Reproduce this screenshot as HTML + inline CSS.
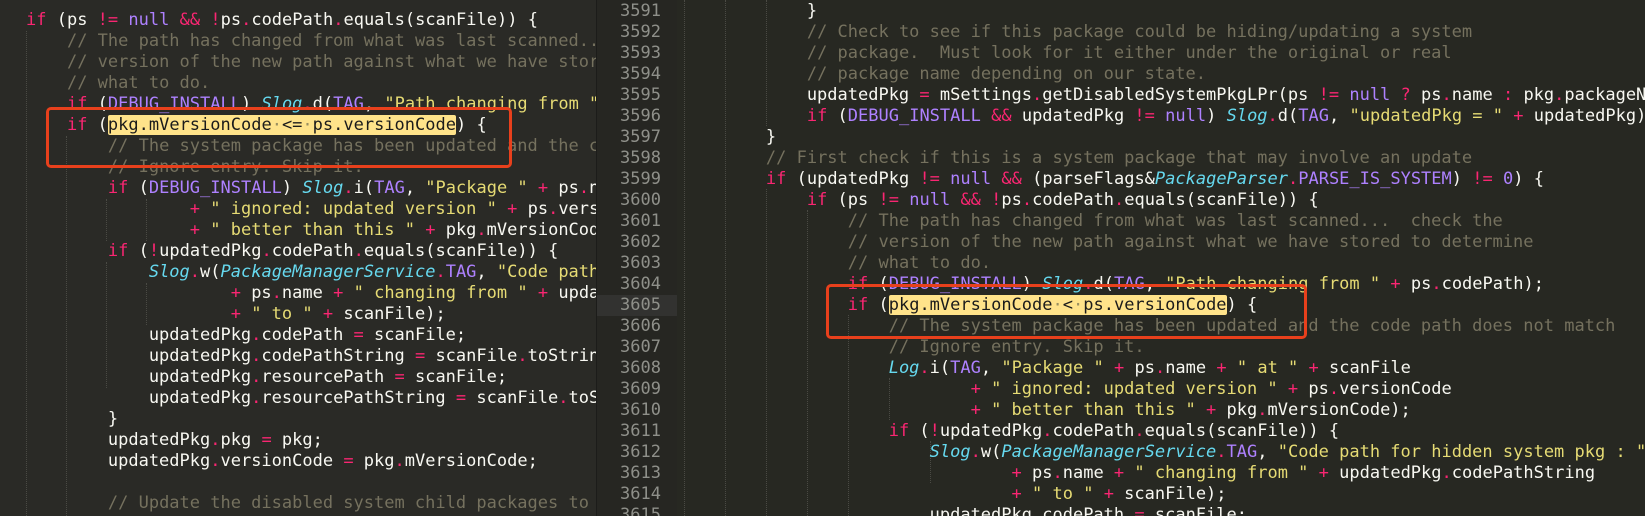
<!DOCTYPE html>
<html><head><meta charset="utf-8"><style>
html,body{margin:0;padding:0;}
body{width:1645px;height:516px;overflow:hidden;position:relative;background:#272822;font-family:"DejaVu Sans Mono","Liberation Mono",monospace;}
.pane{position:absolute;top:0;height:516px;overflow:hidden;}
#L{left:0;width:596px;background:#2a2a26;}
#G{left:597px;width:80px;background:#262622;}
#R{left:677px;width:968px;background:#272822;}
#div{position:absolute;left:596px;top:0;width:1px;height:516px;background:#1c1c1a;}
pre{margin:0;position:absolute;font-family:"DejaVu Sans Mono",monospace;font-size:17px;line-height:21px;color:#f8f8f2;white-space:pre;}
kw{color:#f92672}pu{color:#ae81ff}cm{color:#75715e}st{color:#e6db74}ty{color:#66d9ef;font-style:italic}
hl{background:#ffe38a;color:#1b1b1b;border-radius:2px}
hl dot{color:#9a8f60}
.gn{position:absolute;left:0;width:64px;text-align:right;color:#8f908a;font-size:17px;line-height:21px;font-family:"DejaVu Sans Mono",monospace;white-space:pre;}
.guide{position:absolute;width:0;border-left:1px dotted #4a4a44;}
.box{position:absolute;border:3px solid #e8401c;border-radius:5px;box-sizing:border-box;}
</style></head><body>
<div class="pane" id="L">
<div class="guide" style="left:26px;top:31px;height:485px"></div>
<div class="guide" style="left:66px;top:136px;height:380px"></div>
<div class="guide" style="left:106px;top:199px;height:42px"></div>
<div class="guide" style="left:106px;top:262px;height:126px"></div>
<div class="guide" style="left:146px;top:199px;height:42px"></div>
<div class="guide" style="left:146px;top:283px;height:42px"></div>
<pre style="left:26px;top:9.5px"><kw>if</kw> (ps <kw>!=</kw> <pu>null</pu> <kw>&amp;&amp;</kw> <kw>!</kw>ps<kw>.</kw>codePath<kw>.</kw>equals(scanFile)) {
    <cm>// The path has changed from what was last scanned...  check the</cm>
    <cm>// version of the new path against what we have stored to determine</cm>
    <cm>// what to do.</cm>
    <kw>if</kw> (<pu>DEBUG_INSTALL</pu>) <ty>Slog</ty><kw>.</kw>d(<pu>TAG</pu>, <st>"Path changing from "</st> <kw>+</kw> ps<kw>.</kw>codePath);
    <kw>if</kw> (<hl>pkg.mVersionCode<dot>·</dot>&lt;=<dot>·</dot>ps.versionCode</hl>) {
        <cm>// The system package has been updated and the code path does not match</cm>
        <cm>// Ignore entry. Skip it.</cm>
        <kw>if</kw> (<pu>DEBUG_INSTALL</pu>) <ty>Slog</ty><kw>.</kw>i(<pu>TAG</pu>, <st>"Package "</st> <kw>+</kw> ps<kw>.</kw>name <kw>+</kw> <st>" at "</st>
                <kw>+</kw> <st>" ignored: updated version "</st> <kw>+</kw> ps<kw>.</kw>versionCode
                <kw>+</kw> <st>" better than this "</st> <kw>+</kw> pkg<kw>.</kw>mVersionCode);
        <kw>if</kw> (<kw>!</kw>updatedPkg<kw>.</kw>codePath<kw>.</kw>equals(scanFile)) {
            <ty>Slog</ty><kw>.</kw>w(<ty>PackageManagerService</ty><kw>.</kw><pu>TAG</pu>, <st>"Code path for hidden system pkg : "</st>
                    <kw>+</kw> ps<kw>.</kw>name <kw>+</kw> <st>" changing from "</st> <kw>+</kw> updatedPkg<kw>.</kw>codePathString
                    <kw>+</kw> <st>" to "</st> <kw>+</kw> scanFile);
            updatedPkg<kw>.</kw>codePath <kw>=</kw> scanFile;
            updatedPkg<kw>.</kw>codePathString <kw>=</kw> scanFile<kw>.</kw>toString();
            updatedPkg<kw>.</kw>resourcePath <kw>=</kw> scanFile;
            updatedPkg<kw>.</kw>resourcePathString <kw>=</kw> scanFile<kw>.</kw>toString();
        }
        updatedPkg<kw>.</kw>pkg <kw>=</kw> pkg;
        updatedPkg<kw>.</kw>versionCode <kw>=</kw> pkg<kw>.</kw>mVersionCode;

        <cm>// Update the disabled system child packages to point to the package too.</cm></pre>
</div>
<div id="div"></div>
<div class="pane" id="G">
<div style="position:absolute;left:0;top:294.5px;width:80px;height:21px;background:#323230"></div>
<div class="gn" style="top:0.5px">3591
3592
3593
3594
3595
3596
3597
3598
3599
3600
3601
3602
3603
3604
3605
3606
3607
3608
3609
3610
3611
3612
3613
3614
3615</div>
</div>
<div class="pane" id="R">
<div class="guide" style="left:7px;top:0;height:516px"></div>
<div class="guide" style="left:48px;top:0;height:516px"></div>
<div class="guide" style="left:89px;top:0;height:126px"></div>
<div class="guide" style="left:89px;top:189px;height:327px"></div>
<div class="guide" style="left:130px;top:210px;height:306px"></div>
<div class="guide" style="left:171px;top:315px;height:201px"></div>
<div class="guide" style="left:212px;top:378px;height:42px"></div>
<div class="guide" style="left:253px;top:441px;height:42px"></div>
<pre style="left:7px;top:0.5px">            }
            <cm>// Check to see if this package could be hiding/updating a system</cm>
            <cm>// package.  Must look for it either under the original or real</cm>
            <cm>// package name depending on our state.</cm>
            updatedPkg <kw>=</kw> mSettings<kw>.</kw>getDisabledSystemPkgLPr(ps <kw>!=</kw> <pu>null</pu> <kw>?</kw> ps<kw>.</kw>name <kw>:</kw> pkg<kw>.</kw>packageName);
            <kw>if</kw> (<pu>DEBUG_INSTALL</pu> <kw>&amp;&amp;</kw> updatedPkg <kw>!=</kw> <pu>null</pu>) <ty>Slog</ty><kw>.</kw>d(<pu>TAG</pu>, <st>"updatedPkg = "</st> <kw>+</kw> updatedPkg);
        }
        <cm>// First check if this is a system package that may involve an update</cm>
        <kw>if</kw> (updatedPkg <kw>!=</kw> <pu>null</pu> <kw>&amp;&amp;</kw> (parseFlags&amp;<ty>PackageParser</ty><kw>.</kw><pu>PARSE_IS_SYSTEM</pu>) <kw>!=</kw> <pu>0</pu>) {
            <kw>if</kw> (ps <kw>!=</kw> <pu>null</pu> <kw>&amp;&amp;</kw> <kw>!</kw>ps<kw>.</kw>codePath<kw>.</kw>equals(scanFile)) {
                <cm>// The path has changed from what was last scanned...  check the</cm>
                <cm>// version of the new path against what we have stored to determine</cm>
                <cm>// what to do.</cm>
                <kw>if</kw> (<pu>DEBUG_INSTALL</pu>) <ty>Slog</ty><kw>.</kw>d(<pu>TAG</pu>, <st>"Path changing from "</st> <kw>+</kw> ps<kw>.</kw>codePath);
                <kw>if</kw> (<hl>pkg.mVersionCode<dot>·</dot>&lt;<dot>·</dot>ps.versionCode</hl>) {
                    <cm>// The system package has been updated and the code path does not match</cm>
                    <cm>// Ignore entry. Skip it.</cm>
                    <ty>Log</ty><kw>.</kw>i(<pu>TAG</pu>, <st>"Package "</st> <kw>+</kw> ps<kw>.</kw>name <kw>+</kw> <st>" at "</st> <kw>+</kw> scanFile
                            <kw>+</kw> <st>" ignored: updated version "</st> <kw>+</kw> ps<kw>.</kw>versionCode
                            <kw>+</kw> <st>" better than this "</st> <kw>+</kw> pkg<kw>.</kw>mVersionCode);
                    <kw>if</kw> (<kw>!</kw>updatedPkg<kw>.</kw>codePath<kw>.</kw>equals(scanFile)) {
                        <ty>Slog</ty><kw>.</kw>w(<ty>PackageManagerService</ty><kw>.</kw><pu>TAG</pu>, <st>"Code path for hidden system pkg : "</st>
                                <kw>+</kw> ps<kw>.</kw>name <kw>+</kw> <st>" changing from "</st> <kw>+</kw> updatedPkg<kw>.</kw>codePathString
                                <kw>+</kw> <st>" to "</st> <kw>+</kw> scanFile);
                        updatedPkg<kw>.</kw>codePath <kw>=</kw> scanFile;</pre>
</div>
<div class="box" style="left:46px;top:107px;width:466px;height:61px"></div>
<div class="box" style="left:826px;top:284px;width:481px;height:55px"></div>
</body></html>
